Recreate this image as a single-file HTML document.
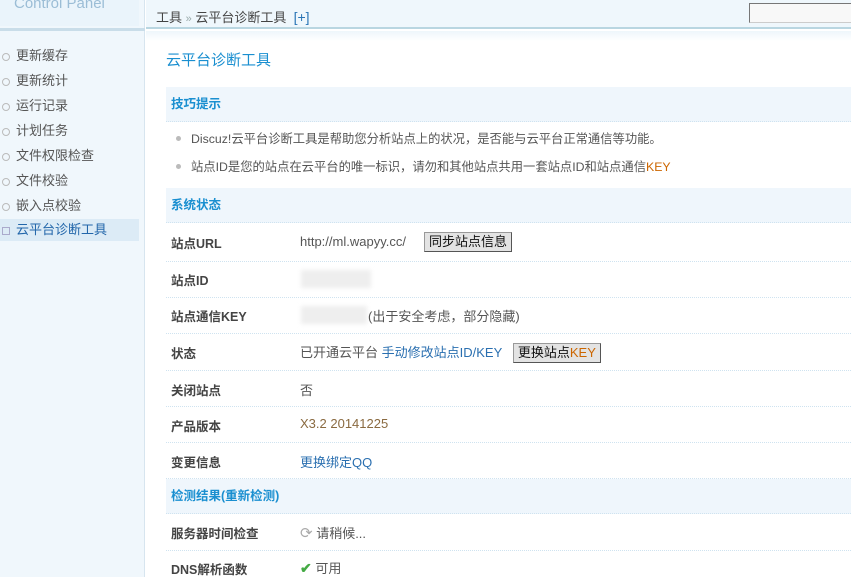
<!DOCTYPE html>
<html><head><meta charset="utf-8"><style>
*{margin:0;padding:0;box-sizing:border-box}
body{width:851px;height:577px;overflow:hidden;background:#fff;font:12px "Liberation Sans","Noto Sans CJK SC",sans-serif;color:#333;position:relative}
#side{position:absolute;left:0;top:0;width:145px;height:577px;background:#f0f7fc;border-right:1px solid #d7e5ef}
#logo{position:absolute;left:0;top:0;width:139px;height:26px;background:#eaf4fb;color:#9bbdd6;font-size:15px;padding-left:14px;line-height:8px}
#sidetop{position:absolute;left:0;top:28px;width:145px;height:3px;background:#c9dde9}
.nav{position:absolute;left:0;width:139px;height:22px;line-height:22px;padding-left:16px;color:#555;font-size:13px}
.nav:before{content:"";position:absolute;left:2px;top:8px;width:6px;height:6px;border:1px solid #bbb;border-radius:50%}
.nav.on{background:#dcebf6;color:#2266aa}
.nav.on:before{border-radius:0;border-color:#aac}
#top{position:absolute;left:146px;top:0;right:0;height:29px;background:#eff7fc;border-bottom:2px solid #b9d6e1}
#crumb{position:absolute;left:156px;top:7px;font-size:13px;color:#444}
#crumb b{font-weight:normal;color:#9aa;font-size:11px}
#crumb span{color:#2a75b5;font-size:14px}
#search{position:absolute;left:749px;top:3px;width:110px;height:20px;border:1px solid #777;border-right:none;border-bottom-color:#ccc;background:#f8f8f8}
#shade{position:absolute;left:146px;top:31px;right:0;height:10px;background:linear-gradient(#eef6fb,#fff)}
h1{position:absolute;left:166px;top:49px;font-size:15px;color:#1a8fd0;font-weight:normal}
.band{position:absolute;left:166px;right:0;height:35px;background:#eff6fc;border-bottom:1px dotted #cfe3f0;color:#1a8fd0;font-weight:bold;font-size:12.5px;line-height:35px;padding-left:5px}
.tip{position:absolute;left:191px;color:#555;font-size:12.3px}
.tip:before{content:"";position:absolute;left:-15px;top:7px;width:5px;height:5px;border-radius:50%;background:#bbb}
.row{position:absolute;left:166px;right:0;border-bottom:1px dotted #cfe3f0}
.lb{position:absolute;left:171px;font-weight:bold;color:#444;font-size:12.5px}
.v{position:absolute;left:300px;color:#555;font-size:13px}
a{color:#2a6fb0;text-decoration:none}
.btn{display:inline-block;background:#e3e3e3;border:1px solid #999;border-right-color:#555;border-bottom-color:#555;padding:1px 4px;color:#111;font-size:13px;line-height:16px}
.blur{position:absolute;background:#eee;filter:blur(2px)}
</style></head><body>
<div id="side">
<div id="logo">Control Panel</div>
<div id="sidetop"></div>
<div class="nav" style="top:45px">更新缓存</div>
<div class="nav" style="top:70px">更新统计</div>
<div class="nav" style="top:95px">运行记录</div>
<div class="nav" style="top:120px">计划任务</div>
<div class="nav" style="top:145px">文件权限检查</div>
<div class="nav" style="top:170px">文件校验</div>
<div class="nav" style="top:195px">嵌入点校验</div>
<div class="nav on" style="top:219px">云平台诊断工具</div>
</div>
<div id="top"></div>
<div id="crumb">工具 <b>»</b> 云平台诊断工具 &nbsp;<span>[+]</span></div>
<div id="search"></div>
<div id="shade"></div>
<h1>云平台诊断工具</h1>
<div class="band" style="top:87px">技巧提示</div>
<div class="tip" style="top:129px">Discuz!云平台诊断工具是帮助您分析站点上的状况，是否能与云平台正常通信等功能。</div>
<div class="tip" style="top:157px">站点ID是您的站点在云平台的唯一标识，请勿和其他站点共用一套站点ID和站点通信<span style="color:#c60">KEY</span></div>
<div class="band" style="top:188px">系统状态</div>
<div class="row" style="top:223px;height:39px"></div>
<div class="lb" style="top:233px">站点URL</div>
<div class="v" style="top:232px">http://ml.wapyy.cc/ &nbsp;&nbsp;&nbsp; <span class="btn">同步站点信息</span></div>
<div class="row" style="top:262px;height:36px"></div>
<div class="lb" style="top:270px">站点ID</div>
<div class="blur" style="left:301px;top:270px;width:70px;height:18px"></div>
<div class="row" style="top:298px;height:36px"></div>
<div class="lb" style="top:306px">站点通信KEY</div>
<div class="blur" style="left:301px;top:306px;width:66px;height:18px"></div>
<div class="v" style="top:306px;left:368px">(出于安全考虑，部分隐藏)</div>
<div class="row" style="top:334px;height:37px"></div>
<div class="lb" style="top:343px">状态</div>
<div class="v" style="top:342px">已开通云平台 <a>手动修改站点ID/KEY</a> &nbsp;&nbsp;<span class="btn">更换站点<span style="color:#c60">KEY</span></span></div>
<div class="row" style="top:371px;height:36px"></div>
<div class="lb" style="top:380px">关闭站点</div>
<div class="v" style="top:380px">否</div>
<div class="row" style="top:407px;height:36px"></div>
<div class="lb" style="top:416px">产品版本</div>
<div class="v" style="top:416px;color:#8a6a40">X3.2 20141225</div>
<div class="row" style="top:443px;height:36px"></div>
<div class="lb" style="top:452px">变更信息</div>
<div class="v" style="top:452px"><a>更换绑定QQ</a></div>
<div class="band" style="top:479px">检测结果(重新检测)</div>
<div class="row" style="top:514px;height:37px"></div>
<div class="lb" style="top:523px">服务器时间检查</div>
<div class="v" style="top:523px"><span style="color:#aaa;font-size:15px">⟳</span> 请稍候...</div>
<div class="lb" style="top:559px">DNS解析函数</div>
<div class="v" style="top:558px"><span style="color:#4a4;font-weight:bold;font-size:14px">✔</span> 可用</div>
</body></html>
